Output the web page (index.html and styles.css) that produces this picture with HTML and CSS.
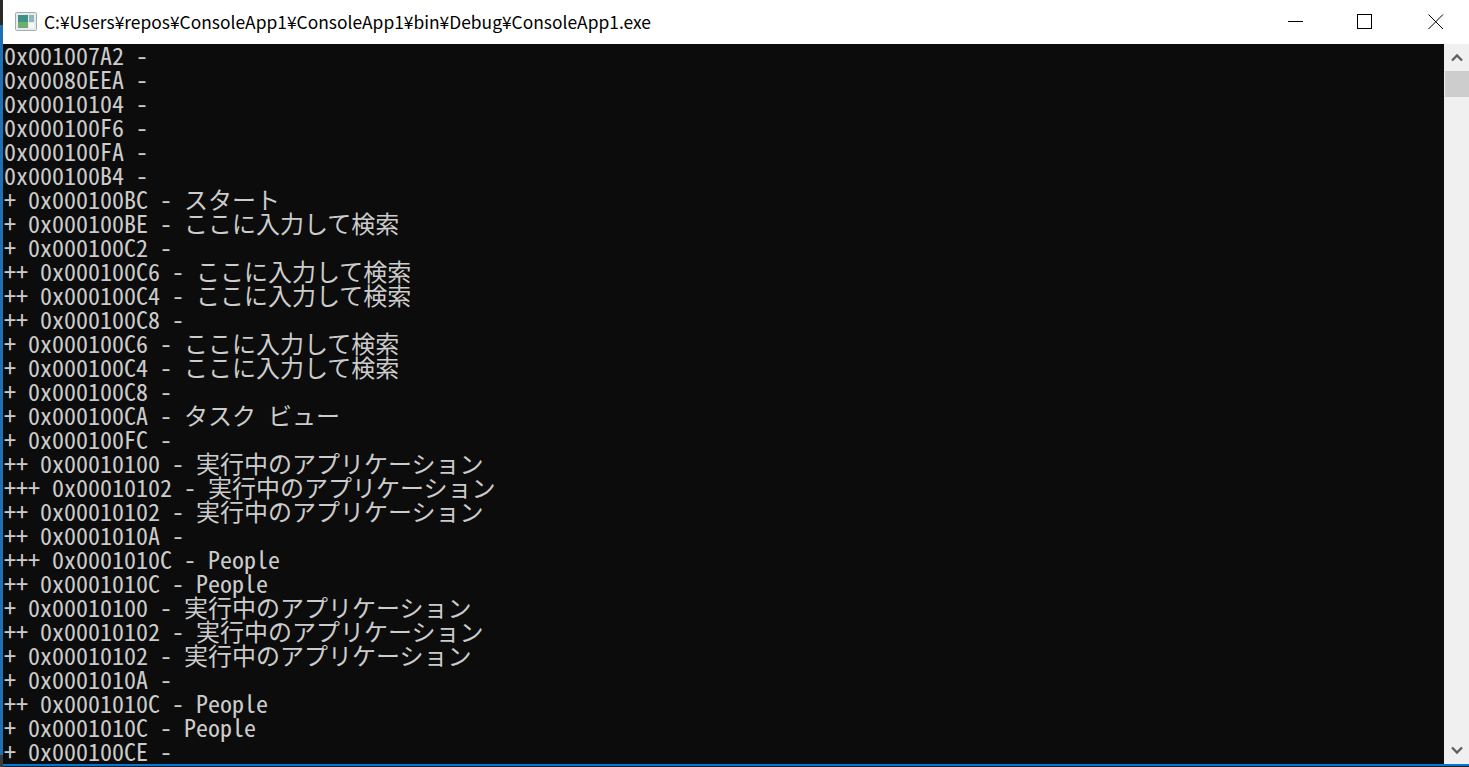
FILE: index.html
```html
<!DOCTYPE html>
<html lang="ja">
<head>
<meta charset="utf-8">
<title>ConsoleApp1</title>
<link rel="stylesheet" href="styles.css">
</head>
<body>
<div class="desktop-edge">
  <span class="edge-dark"></span>
  <span class="edge-blue"></span>
  <span class="edge-grey"></span>
</div>
<div class="window">
  <header class="titlebar">
    <svg class="app-icon" width="22" height="20" viewBox="0 0 22 20">
      <rect x="0.5" y="0.5" width="21" height="18" rx="1" fill="#e6ebee" stroke="#a4abb0"/>
      <rect x="3" y="3" width="10" height="13" fill="#3f8f8a"/>
      <rect x="3" y="10" width="10" height="6" fill="#6fae6a"/>
      <rect x="14" y="3" width="5" height="7" fill="#8fb6ba"/>
      <rect x="14" y="11" width="5" height="5" fill="#f4f6f7"/>
    </svg>
    <span class="title">C:¥Users¥repos¥ConsoleApp1¥ConsoleApp1¥bin¥Debug¥ConsoleApp1.exe</span>
    <div class="controls">
      <button class="ctl"><svg width="16" height="16" viewBox="0 0 16 16"><path d="M0 7.5H15" stroke="#000" fill="none"/></svg></button>
      <button class="ctl ctl-max"><svg width="16" height="16" viewBox="0 0 16 16"><rect x="0.5" y="0.5" width="14" height="14" stroke="#000" fill="none"/></svg></button>
      <button class="ctl"><svg width="16" height="16" viewBox="0 0 16 16"><path d="M0.5 0.5L15 15M15 0.5L0.5 15" stroke="#000" fill="none"/></svg></button>
    </div>
  </header>
  <main class="client">
    <pre class="console">0x001007A2 -
0x00080EEA -
0x00010104 -
0x000100F6 -
0x000100FA -
0x000100B4 -
+ 0x000100BC - スタート
+ 0x000100BE - ここに入力して検索
+ 0x000100C2 -
++ 0x000100C6 - ここに入力して検索
++ 0x000100C4 - ここに入力して検索
++ 0x000100C8 -
+ 0x000100C6 - ここに入力して検索
+ 0x000100C4 - ここに入力して検索
+ 0x000100C8 -
+ 0x000100CA - タスク ビュー
+ 0x000100FC -
++ 0x00010100 - 実行中のアプリケーション
+++ 0x00010102 - 実行中のアプリケーション
++ 0x00010102 - 実行中のアプリケーション
++ 0x0001010A -
+++ 0x0001010C - People
++ 0x0001010C - People
+ 0x00010100 - 実行中のアプリケーション
++ 0x00010102 - 実行中のアプリケーション
+ 0x00010102 - 実行中のアプリケーション
+ 0x0001010A -
++ 0x0001010C - People
+ 0x0001010C - People
+ 0x000100CE -</pre>
    <aside class="scrollbar">
      <div class="arrow"><svg width="12" height="9" viewBox="0 0 12 9"><path d="M1 7.5L6 2.5L11 7.5" stroke="#606060" stroke-width="2.4" fill="none"/></svg></div>
      <div class="thumb"></div>
      <div class="track"></div>
      <div class="arrow"><svg width="12" height="9" viewBox="0 0 12 9"><path d="M1 1.5L6 6.5L11 1.5" stroke="#606060" stroke-width="2.4" fill="none"/></svg></div>
    </aside>
  </main>
</div>
</body>
</html>
```
FILE: styles.css
```css
html, body {
  margin: 0;
  height: 100%;
  overflow: hidden;
  background: #1f1f1f;
}
body {
  display: flex;
}
.desktop-edge {
  width: 3px;
  flex: none;
  display: flex;
  flex-direction: column;
}
.edge-dark {
  height: 25px;
  background: #2a2a2a;
}
.edge-blue {
  flex: 1;
  background: #1f6fb5;
}
.edge-grey {
  height: 12px;
  background: #3c3c3c;
}
.window {
  flex: 1;
  min-width: 0;
  height: 766px;
  display: flex;
  flex-direction: column;
  box-sizing: border-box;
  border-bottom: 2px solid #0078d7;
}
.titlebar {
  height: 44px;
  flex: none;
  background: #fff;
  display: flex;
  align-items: center;
  padding-left: 12px;
}
.app-icon {
  flex: none;
  margin-right: 7px;
}
.title {
  font-family: "Noto Sans CJK JP", "Noto Sans", sans-serif;
  font-size: 17.4px;
  color: #000;
  white-space: nowrap;
  margin-bottom: 2px;
}
.controls {
  margin-left: auto;
  margin-right: -2px;
  display: flex;
}
.ctl {
  width: 70px;
  height: 44px;
  border: 0;
  padding: 0;
  background: transparent;
  display: flex;
  align-items: center;
  justify-content: center;
}
.ctl-max svg {
  margin-right: 2px;
}
.client {
  flex: 1;
  min-height: 0;
  display: flex;
  background: #0c0c0c;
}
.console {
  flex: 1;
  margin: -1px 0 0;
  padding: 0 0 0 1px;
  height: 720px;
  color: #cccccc;
  font-family: "Noto Sans CJK JP", monospace;
  font-feature-settings: "hwid";
  font-size: 24px;
  line-height: 24px;
}
.scrollbar {
  width: 25px;
  box-sizing: border-box;
  border-left: 1px solid #f0f0f0;
  flex: none;
  display: flex;
  flex-direction: column;
  background: #f0f0f0;
}
.arrow {
  height: 27px;
  display: flex;
  align-items: center;
  justify-content: center;
}
.thumb {
  height: 26px;
  background: #cdcdcd;
}
.track {
  flex: 1;
}
```
